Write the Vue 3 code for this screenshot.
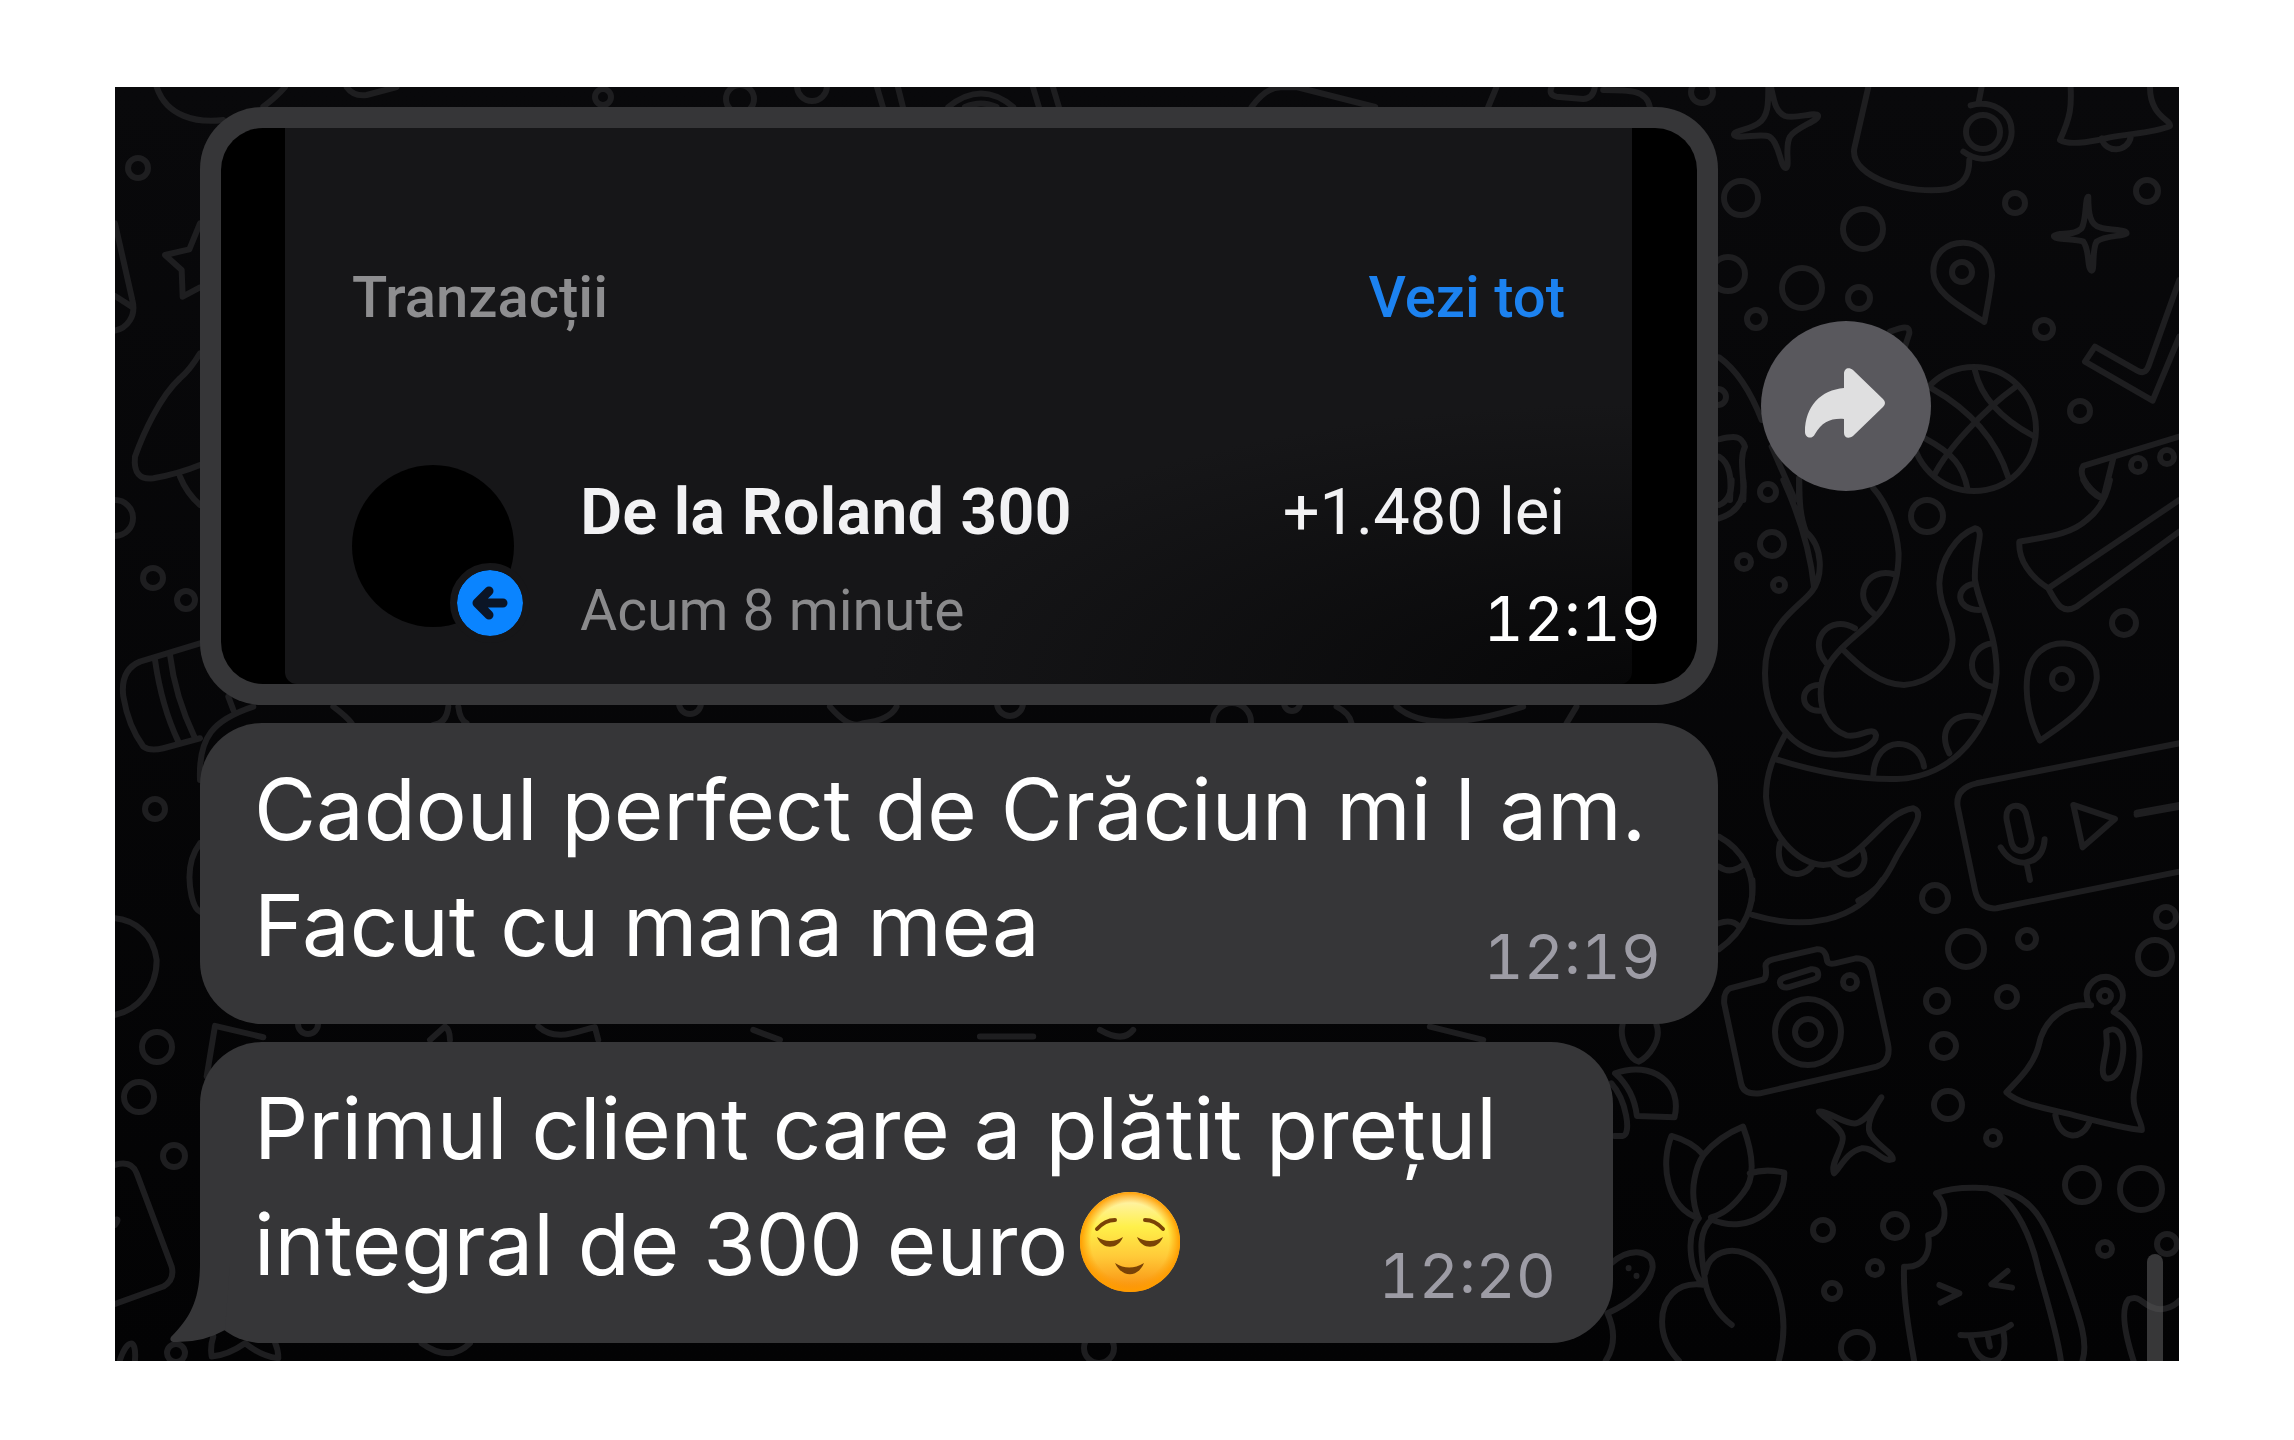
<template>
  <main class="page">
    <section class="chat">
      <svg class="doodles" viewBox="115 87 2064 1274" preserveAspectRatio="xMinYMin slice" aria-hidden="true">
        <circle v-for="([cx, cy, r], i) in rings" :key="i" :cx="cx" :cy="cy" :r="r" />
        <g v-for="sheet in sheets" :key="sheet.transform" :transform="sheet.transform">
          <path v-for="d in sheet.paths" :key="d" :d="d" />
        </g>
      </svg>

      <div class="thread">
        <div class="photo-row">
          <article class="photo-bubble">
            <div class="photo">
              <div class="bank">
                <header class="bank-header">
                  <h2 class="bank-title">Tranzacții</h2>
                  <a class="bank-link" href="#">Vezi tot</a>
                </header>
                <div class="transfer">
                  <div class="avatar">
                    <svg class="badge" viewBox="0 0 66 66" aria-hidden="true">
                      <path d="M46 33H21M32 21 20 33l12 12" />
                    </svg>
                  </div>
                  <div class="transfer-text">
                    <p class="transfer-name">De la Roland 300</p>
                    <p class="transfer-when">Acum 8 minute</p>
                  </div>
                  <p class="transfer-sum">+1.480 lei</p>
                </div>
              </div>
              <time class="time time-photo">12:19</time>
            </div>
          </article>
          <button class="share" type="button" aria-label="Redirecționează">
            <svg viewBox="0 0 170 170" aria-hidden="true">
              <path
                d="M83 67V53c0-6 5-7 9-4l30 29q4 4 0 8l-30 29c-4 3-9 2-9-3V98C70 97 61 101 54 113c-3 6-10 4-10-2C44 85 60 69 83 67Z"
              />
            </svg>
          </button>
        </div>

        <article class="bubble">
          <p class="text">Cadoul perfect de Crăciun mi l am.<br />Facut cu mana mea</p>
          <time class="time">12:19</time>
        </article>

        <article class="bubble bubble-last">
          <svg class="tail" viewBox="0 0 60 80" aria-hidden="true">
            <path d="M30 0C30 36 21 54 1 74Q-1 78 3 79Q33 80 55 67L60 0Z" />
          </svg>
          <p class="text">
            Primul client care a plătit prețul<br />integral de 300 euro<svg
              class="emoji"
              viewBox="0 0 100 100"
              role="img"
              aria-label="😌"
            >
              <defs>
                <linearGradient id="face" x1="0" y1="0" x2="0" y2="1">
                  <stop offset="0" stop-color="#fff3c4" />
                  <stop offset="0.35" stop-color="#fff04a" />
                  <stop offset="0.65" stop-color="#ffc938" />
                  <stop offset="1" stop-color="#f98b0c" />
                </linearGradient>
                <radialGradient id="rim">
                  <stop offset="0.78" stop-color="#ff9d00" stop-opacity="0" />
                  <stop offset="1" stop-color="#ff9d00" />
                </radialGradient>
              </defs>
              <circle cx="50" cy="50" r="50" fill="url(#face)" />
              <circle cx="50" cy="50" r="50" fill="url(#rim)" />
              <g fill="none" stroke="#7a4206" stroke-width="4" stroke-linecap="round">
                <path d="M17 37Q25 28 35 28" />
                <path d="M65 28Q75 28 83 37" />
              </g>
              <g fill="#7a4206">
                <path d="M17 45Q30 53 43 45C38 58 22 58 17 45Z" />
                <path d="M57 45Q70 53 83 45C78 58 62 58 57 45Z" />
                <path d="M35 71Q49 80 64 71C58 86 42 86 35 71Z" />
              </g>
            </svg>
          </p>
          <time class="time">12:20</time>
        </article>
      </div>

      <div class="scrollbar"></div>
    </section>
  </main>
</template>

<script setup>
// wallpaper bubbles: cx, cy, r
const rings = [
  [1741, 198, 17], [1863, 229, 20], [1802, 288, 20], [1859, 298, 11], [1756, 319, 9],
  [1728, 274, 17], [2015, 203, 10], [2147, 191, 11], [1962, 272, 10], [2044, 329, 9],
  [2080, 411, 10], [2138, 465, 7], [2167, 457, 7], [1768, 492, 8], [1983, 132, 17],
  [1702, 92, 11], [1718, 397, 8], [1974, 429, 62], [1927, 516, 16], [1772, 544, 12],
  [1744, 562, 7], [1779, 585, 6], [2124, 623, 12], [2062, 679, 10], [1935, 898, 13],
  [1966, 949, 18], [2027, 939, 9], [2166, 917, 10], [2155, 957, 17], [1937, 1001, 11],
  [2007, 997, 10], [1944, 1046, 12], [1948, 1105, 14], [1993, 1138, 7], [2082, 1185, 17],
  [2141, 1189, 21], [1895, 1226, 12], [1823, 1230, 10], [1875, 1268, 7], [1832, 1291, 8],
  [1857, 1348, 16], [2105, 1249, 7], [2167, 1244, 10], [1808, 1032, 33], [1808, 1032, 13],
  [1850, 982, 7], [2105, 996, 6], [138, 168, 10], [153, 578, 10], [186, 600, 9],
  [115, 518, 18], [155, 809, 10], [157, 1047, 15], [139, 1097, 15], [174, 1156, 11],
  [176, 1353, 9], [603, 97, 8], [740, 99, 14], [812, 86, 15], [308, 1024, 10],
  [690, 703, 11], [1010, 703, 13], [1232, 722, 19], [1292, 703, 8], [1099, 1348, 15]
]

const sheets = [
  {
    // top right: sparkles, mug, bell, pin, ball, tick, shoe
    transform: 'translate(1700 80) scale(0.3333)',
    paths: [
      'M205 21C205 70 205 110 175 130C150 148 100 152 102 164C108 180 185 158 208 170C240 190 240 262 257 264C272 262 252 200 270 170C290 140 360 122 354 106C345 95 285 118 255 108C225 95 222 60 213 21',
      'M505 21L463 205C455 250 500 285 560 308C620 330 690 335 740 328C800 315 808 275 808 240M845 21L835 72M812 76C870 60 935 90 935 155C935 220 860 265 790 215',
      'M1112 21C1115 80 1112 110 1080 180C1110 200 1200 180 1230 172C1290 160 1360 160 1410 138C1415 120 1350 110 1350 21M1205 175C1215 220 1285 220 1293 168',
      'M1165 350C1165 400 1170 435 1200 442C1230 452 1280 448 1280 460C1270 470 1215 465 1190 485C1175 510 1185 572 1175 572C1160 565 1170 510 1150 485C1125 475 1060 480 1062 468C1075 455 1120 470 1145 445C1160 420 1155 350 1165 350Z',
      'M853 726C790 685 700 640 700 575C700 520 740 488 790 488C840 488 878 530 876 590C870 640 860 690 853 726Z',
      'M1438 600L1345 860Q1335 885 1312 872L1185 800L1155 845L1358 962L1438 770',
      'M825 872C845 960 910 1020 1000 1068M948 920C850 990 740 1110 703 1185M695 925C810 990 890 1080 925 1192M675 1075C760 1120 790 1160 802 1225',
      'M1438 1070L1150 1158C1130 1190 1180 1240 1210 1255L1240 1135M570 755C610 740 630 735 628 760L615 800',
      'M57 832C110 870 150 930 185 1020M57 1078C110 1065 125 1070 135 1100C115 1140 135 1190 130 1260M57 1130C90 1150 95 1190 90 1260M215 1100L285 1260M297 1195V1260'
    ]
  },
  {
    // right: octopus arms, shoe sole, pin, voice message
    transform: 'translate(1700 480) scale(0.3333)',
    paths: [
      'M250 0C300 110 330 210 342 320M298 0C298 60 300 110 318 155C370 200 370 290 335 335C290 390 195 430 195 580C195 700 270 822 400 824C480 826 530 790 528 765C520 735 480 775 440 766C390 750 362 700 362 640C362 580 390 540 425 505C500 430 596 390 596 220C590 140 560 70 520 25',
      'M425 505C480 560 540 615 612 615C690 610 755 550 758 480C755 410 720 390 718 310C720 240 770 165 825 145C860 150 820 210 825 300C840 390 890 450 890 580C880 740 760 895 590 897C460 900 330 870 228 838',
      'M580 282C500 262 455 350 522 402M465 445C390 400 320 480 378 548M362 615C295 610 295 700 365 692M820 312C765 320 765 390 838 390M878 490C795 500 795 610 880 620M838 712C760 690 710 750 748 820M520 885C525 760 660 770 672 860',
      'M255 765C220 830 198 880 198 950C205 1060 290 1150 370 1155C490 1150 540 1000 640 985C680 1000 630 1060 590 1130C550 1210 530 1230 475 1262M240 1090C220 1170 290 1210 335 1160M485 1105C520 1170 440 1215 400 1158',
      'M57 1070C130 1110 165 1180 155 1262M57 1160Q90 1185 130 1155M57 75Q95 60 95 0M57 115Q140 90 130 0',
      'M1438 60L1045 325C990 290 955 240 958 185C1040 170 1110 165 1160 120C1200 90 1220 50 1230 0M1045 325C1070 370 1085 405 1130 380L1438 155M1150 0Q1170 40 1205 55',
      'M1020 782C985 710 975 650 982 590C990 520 1040 490 1090 490C1150 492 1195 540 1190 600C1180 680 1080 740 1020 782Z',
      'M1438 790L830 910Q765 925 773 980L825 1230Q838 1290 890 1285L1438 1175',
      'M920 1020Q915 980 948 977Q975 978 980 1010L995 1075Q995 1110 965 1113Q938 1112 933 1080ZM902 1102Q930 1150 975 1148Q1030 1140 1034 1078M980 1150L990 1200M1120 975L1245 1017L1148 1102ZM1310 998L1438 975',
      'M1310 1004L1438 981'
    ]
  },
  {
    // bottom right: camera, bell, sparkle, tulip, ice cream
    transform: 'translate(1600 880) scale(0.3763 0.3333)',
    paths: [
      'M345 325L430 300Q445 298 440 260Q438 245 460 238L575 208Q600 205 603 240Q605 255 625 250L680 235Q715 235 722 270L765 490Q775 545 735 560L425 640Q380 645 375 610L330 370Q328 335 345 325Z',
      'M490 293L560 268Q580 265 580 285Q580 295 565 300L500 322Q480 325 478 308Q478 298 490 293Z',
      'M1305 376C1240 370 1180 410 1165 500C1150 560 1110 600 1080 637C1110 670 1180 685 1240 700C1310 720 1390 745 1440 750C1440 720 1410 690 1420 630C1440 540 1450 450 1365 396M1300 372C1280 330 1310 290 1345 290C1390 295 1405 360 1370 388M1210 705C1220 780 1280 785 1300 728M1345 455C1370 435 1395 460 1390 520C1385 570 1370 600 1345 595C1325 580 1345 530 1347 490Z',
      'M748 652C720 700 705 740 720 765C740 800 780 820 778 838C750 850 730 800 695 805C655 815 635 870 622 880C610 850 650 800 645 770C640 740 590 710 582 695C605 690 650 735 680 730C715 720 740 660 748 652Z',
      'M190 768C160 850 175 980 262 1015C230 930 260 850 275 825Q245 785 190 768ZM275 825Q315 770 380 740C410 830 410 900 380 940Q340 1000 295 1012M398 880Q440 865 490 878C490 980 400 1070 295 1018',
      'M262 1015C230 1060 235 1160 270 1210M300 1015C250 1060 275 1150 280 1210C290 1260 310 1300 350 1335M280 1215C200 1200 165 1260 165 1325C165 1380 190 1420 210 1443M280 1180C290 1110 350 1105 385 1120C480 1160 505 1320 475 1443',
      'M835 1443C820 1350 805 1250 808 1160C860 1165 880 1120 872 1065C920 1055 930 980 893 940C950 915 1050 920 1090 940C1170 970 1200 1080 1230 1170C1270 1300 1300 1380 1282 1443M1030 925C1110 960 1150 1090 1165 1170C1190 1270 1215 1360 1225 1443',
      'M902 1215L955 1240L905 1268M1083 1173L1040 1213L1095 1223M958 1365Q1050 1370 1092 1335M985 1372Q1000 1443 1040 1443Q1085 1440 1072 1355M1030 1365L1036 1400',
      'M1418 1443C1400 1380 1380 1290 1405 1258C1440 1240 1440 1285 1490 1288Q1520 1285 1540 1262',
      'M60 434C50 480 80 540 103 545C130 530 165 480 150 434M40 580C140 540 220 610 198 712L98 708Q90 630 40 580ZM30 610C70 660 85 765 60 768H38M30 1150C80 1100 140 1110 140 1160C135 1220 80 1270 20 1300C40 1350 40 1400 15 1443M76 1164V1165M97 1187V1188',
      'M405 0C410 70 390 150 316 208M405 105C540 150 680 130 750 0M316 130Q350 115 370 140'
    ]
  },
  {
    // left edge and the strips between the messages
    transform: 'translate(100 80) scale(0.3333)',
    paths: [
      'M170 21C200 110 290 130 370 120M555 21Q530 50 490 80M740 21Q760 50 800 45L890 21',
      'M45 430L97 660C110 710 80 745 45 752M45 648L95 680M300 430L268 508L195 525L245 570L248 650L300 622',
      'M300 820Q270 870 240 895C180 950 130 1060 105 1130C100 1180 120 1200 160 1195Q240 1180 300 1155M240 1190Q260 1240 300 1275',
      'M300 1690L120 1745Q60 1770 70 1850Q85 1940 130 2000Q150 2015 190 2005L300 1975M165 1740Q185 1880 235 1985M210 1725Q225 1850 285 1975M385 1850L400 1890M300 2100C295 1970 340 1920 460 1880M700 1880Q740 1910 755 1930M1045 1880Q1040 1930 1000 1935M1075 1880Q1080 1920 1100 1930',
      'M300 2290C270 2330 260 2380 275 2450Q285 2490 300 2495M45 2515C100 2520 160 2560 170 2640C170 2730 110 2790 45 2805',
      'M490 2872L345 2838L320 2990M990 2880L1035 2840Q1050 2850 1050 2880M1315 2840C1370 2890 1440 2850 1485 2842L1495 2880',
      'M45 3255Q95 3240 110 3280L215 3560Q225 3600 190 3620L45 3672M60 3840C80 3780 110 3770 105 3840M340 3770Q330 3800 335 3830Q385 3825 435 3790Q485 3830 535 3835Q535 3810 525 3788M965 3790Q1050 3850 1110 3790M45 3420Q60 3415 45 3435',
      'M2190 1880Q2250 1950 2290 1930Q2370 1920 2390 1880M3710 1880Q3750 1900 3755 1930M3890 1880Q3990 1970 4270 1880M4430 1880L4400 1930',
      'M2331 21L2349 81M2394 21L2409 81M2545 81Q2645 0 2740 81M2595 81Q2645 60 2690 81M2799 21L2817 81M2859 21L2877 81',
      'M3455 81Q3500 20 3545 22L3590 21L3826 81M4190 21L4165 81M4355 21Q4345 45 4370 50L4450 57Q4480 55 4485 21M4510 30C4590 30 4640 30 4650 81',
      'M3990 2840L4150 2880M3000 2850Q3070 2890 3100 2850M1960 2850L2040 2880M2640 2870H2800'
    ]
  }
]
</script>

<style>
body {
  margin: 0;
  background: #fff;
}
</style>

<style scoped>
.page {
  padding: 87px 115px 79px;
  font-family: Inter, 'Liberation Sans', sans-serif;
}

.chat {
  position: relative;
  overflow: hidden;
  padding: 20px 85px 18px;
  background: linear-gradient(#09090b, #030304);
}

.doodles {
  position: absolute;
  inset: 0;
  width: 100%;
  height: 100%;
  fill: none;
  stroke: #1e1e20;
  stroke-width: 6;
  stroke-linecap: round;
  stroke-linejoin: round;
}

.doodles path {
  vector-effect: non-scaling-stroke;
}

.thread {
  position: relative;
  display: flex;
  flex-direction: column;
  gap: 18px;
}

h2,
p {
  margin: 0;
}

.photo-row {
  display: flex;
  align-items: center;
  gap: 43px;
}

.photo-bubble {
  flex: 0 1 1518px;
  box-sizing: border-box;
  padding: 21px;
  border-radius: 62px;
  background: #363638;
}

.photo {
  position: relative;
  overflow: hidden;
  padding: 0 65px 0 64px;
  border-radius: 42px;
  background: #000;
}

.bank {
  padding: 135px 67px 39px 67px;
  border-radius: 0 0 12px 12px;
  background: radial-gradient(ellipse 760px 280px at 100% 100%, #070708, #161618 100%);
  font-family: Roboto, 'Liberation Sans', sans-serif;
}

.bank-header {
  display: flex;
  justify-content: space-between;
  font-size: 58px;
  line-height: 68px;
}

.bank-title {
  color: #8e8e90;
  font-size: 58px;
  font-weight: 500;
}

.bank-link {
  color: #1c82f0;
  font-weight: 500;
  text-decoration: none;
}

.transfer {
  display: flex;
  margin-top: 134px;
}

.avatar {
  position: relative;
  flex: none;
  width: 162px;
  height: 162px;
  border-radius: 50%;
  background: #000;
}

.badge {
  position: absolute;
  right: -16px;
  bottom: -16px;
  width: 66px;
  height: 66px;
  border: 7px solid #161618;
  border-radius: 50%;
  background: #0a84ff;
  background-clip: padding-box;
  fill: none;
  stroke: #0b1526;
  stroke-width: 9;
  stroke-linecap: round;
  stroke-linejoin: round;
}

.transfer-text {
  display: flex;
  flex: 1;
  flex-direction: column;
  gap: 27px;
  padding: 9px 0 0 66px;
}

.transfer-name,
.transfer-sum {
  color: #f2f2f4;
  font-size: 65px;
  line-height: 76px;
  white-space: nowrap;
}

.transfer-name {
  font-weight: 600;
}

.transfer-sum {
  padding-top: 9px;
}

.transfer-when {
  color: #8a8a8c;
  font-size: 57px;
  line-height: 68px;
}

.share {
  flex: none;
  width: 170px;
  height: 170px;
  padding: 0;
  border: 0;
  border-radius: 50%;
  background: #59585d;
}

.share svg {
  display: block;
  fill: #dfdfe0;
}

.bubble {
  position: relative;
  display: grid;
  box-sizing: border-box;
  width: 100%;
  max-width: 1518px;
  padding: 29px 57px 36px 54px;
  border-radius: 62px;
  background: #363638;
}

.bubble-last {
  max-width: 1413px;
}

.text {
  grid-area: 1 / 1;
  padding-bottom: 4px;
  color: #fff;
  font-size: 85px;
  line-height: 116px;
  white-space: nowrap;
}

.time {
  grid-area: 1 / 1;
  align-self: end;
  justify-self: end;
  color: #9d9ca5;
  font-size: 62px;
  font-variant-numeric: tabular-nums;
  line-height: 62px;
}

.time-photo {
  position: absolute;
  right: 36px;
  bottom: 34px;
  color: #fff;
}

.tail {
  position: absolute;
  bottom: 0;
  left: -30px;
  width: 60px;
  height: 80px;
  fill: #363638;
}

.emoji {
  width: 100px;
  height: 100px;
  margin: -20px 0 -20px 12px;
  vertical-align: 3px;
}

.scrollbar {
  position: absolute;
  right: 16px;
  bottom: 0;
  width: 16px;
  height: 107px;
  border-radius: 8px 8px 0 0;
  background: rgba(90, 90, 92, 0.6);
}
</style>
